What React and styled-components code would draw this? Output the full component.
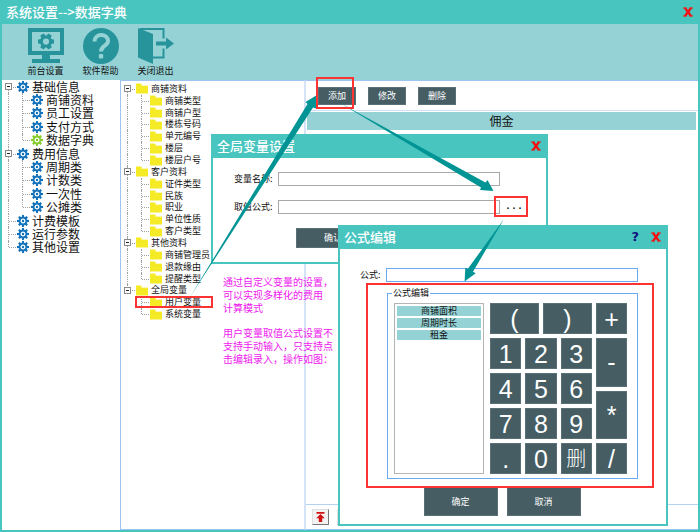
import React from 'react'
import styled, { createGlobalStyle } from 'styled-components'

const settingsTree = [
  {
    label: '基础信息',
    children: ['商铺资料', '员工设置', '支付方式', '数据字典'],
  },
  {
    label: '费用信息',
    children: ['周期类', '计数类', '一次性', '公摊类'],
  },
  { label: '计费模板', children: [] },
  { label: '运行参数', children: [] },
  { label: '其他设置', children: [] },
]

const dictionaryTree = [
  {
    label: '商铺资料',
    children: ['商铺类型', '商铺户型', '楼栋号码', '单元编号', '楼层', '楼层户号'],
  },
  {
    label: '客户资料',
    children: ['证件类型', '民族', '职业', '单位性质', '客户类型'],
  },
  { label: '其他资料', children: ['商铺管理员', '退款缘由', '提醒类型'] },
  { label: '全局变量', children: ['用户变量', '系统变量'] },
]

const digitRows = [
  ['(', ')'],
  ['1', '2', '3'],
  ['4', '5', '6'],
  ['7', '8', '9'],
  ['.', '0', '删'],
]

const GearIcon = ({ color }) => (
  <svg width="12" height="12" viewBox="-12 -12 24 24" aria-hidden="true">
    {[0, 45, 90, 135, 180, 225, 270, 315].map((angle) => (
      <path key={angle} d="M-2.6 -7 L-1.8 -12 H1.8 L2.6 -7 Z" fill={color} transform={`rotate(${angle})`} />
    ))}
    <circle r="6.6" fill="#fff" stroke={color} strokeWidth="3.4" />
    <circle r="2.4" fill={color} />
  </svg>
)

const FolderIcon = () => (
  <svg width="12" height="11" viewBox="0 0 12 11" aria-hidden="true">
    <path d="M0 0.5 H5 L6 2 H12 V10.5 H0 Z" fill="#f5ea26" />
    <path d="M5.5 2.5 H12" stroke="#fffbd0" strokeWidth="0.8" />
  </svg>
)

const CloseIcon = () => (
  <svg width="10" height="10" viewBox="0 0 10 10" aria-hidden="true">
    <path d="M2 1 L8 9 M8 1 L2 9" stroke="#f70d0d" strokeWidth="2.2" />
    <path d="M0 1 H3.6 M6.4 1 H10 M0 9 H3.6 M6.4 9 H10" stroke="#f70d0d" strokeWidth="1.2" />
  </svg>
)

const MonitorIcon = () => (
  <svg width="36" height="36" viewBox="0 0 36 36" aria-hidden="true">
    <path fillRule="evenodd" d="M0 0 H36 V27 H22 V31 H32 V35 H4 V31 H14 V27 H0 Z M4 4 V23 H32 V4 Z" fill="#27949c" />
    <g transform="translate(18 13.5)">
      {[0, 60, 120, 180, 240, 300].map((angle) => (
        <path key={angle} d="M-2.6 -4 L-2 -8 H2 L2.6 -4 Z" fill="#27949c" transform={`rotate(${angle + 30})`} />
      ))}
      <circle r="4.6" fill="none" stroke="#27949c" strokeWidth="3" />
    </g>
  </svg>
)

const HelpIcon = () => (
  <svg width="36" height="36" viewBox="0 0 36 36" aria-hidden="true">
    <circle cx="18" cy="18" r="18" fill="#27949c" />
    <path d="M11.5 13.5 C11.5 5 25 5 25 13 C25 18 18 17.5 18 23.5" fill="none" stroke="#94d2d5" strokeWidth="4" />
    <rect x="15.8" y="26" width="4.4" height="4.4" rx="1" fill="#94d2d5" />
  </svg>
)

const ExitIcon = () => (
  <svg width="36" height="36" viewBox="0 0 36 36" aria-hidden="true">
    <path d="M0 0 L15 6 V36 L0 29.5 Z" fill="#27949c" />
    <path d="M2 1 H25.5 V10.5 M25.5 20.5 V29.5 H15" fill="none" stroke="#27949c" strokeWidth="2" />
    <path d="M18 13.5 H28 V9.5 L36 15.5 L28 21.5 V17.5 H18 Z" fill="#27949c" />
  </svg>
)

const TopIcon = () => (
  <svg width="9" height="10" viewBox="0 0 9 10" aria-hidden="true">
    <path d="M0.5 0 H8.5 V1.7 H0.5 Z M4.5 2 L8.8 6.2 H6.2 V10 H2.8 V6.2 H0.2 Z" fill="#d31313" />
  </svg>
)

// every row starts with guide cells: "start", "tee", "end", "line" or "none"
const Tree = ({ items, renderIcon, compact }) => {
  const rows = []

  items.forEach((item, i) => {
    const lastRoot = i === items.length - 1
    const hasChildren = item.children.length > 0
    rows.push({
      label: item.label,
      guides: [i === 0 ? 'start' : lastRoot ? 'end' : 'tee'],
      hasChildren,
    })
    item.children.forEach((child, j) => {
      rows.push({
        label: child,
        guides: [lastRoot ? 'none' : 'line', j === item.children.length - 1 ? 'end' : 'tee'],
      })
    })
  })

  return (
    <TreeList $compact={compact}>
      {rows.map((row, i) => (
        <TreeRow key={i}>
          {row.guides.map((kind, g) => (
            <Guide key={g} $kind={kind}>
              {row.hasChildren && <Toggle aria-label={`折叠 ${row.label}`} />}
            </Guide>
          ))}
          <TreeIcon>{renderIcon(row.label)}</TreeIcon>
          <TreeLabel $compact={compact}>{row.label}</TreeLabel>
        </TreeRow>
      ))}
    </TreeList>
  )
}

const Annotations = () => (
  <Overlay aria-hidden="true">
    <g fill="#009494">
      <polygon points="190,297 307.5,104 305.5,102 317,95 316,108.5 313,107.5" />
      <polygon points="340,103 485.5,182.5 487.5,180 493.5,191 480,190 481,187.5" />
      <polygon points="504,219 467.7,269 465.3,267.7 464.6,281.5 475.7,273.3 473,271.7" />
    </g>
    <g fill="none" stroke="#fb3333" strokeWidth="2">
      <rect x="317" y="78" width="36" height="30" />
      <rect x="495" y="197" width="32" height="19" />
      <rect x="136" y="297" width="76" height="10" />
      <rect x="367" y="284" width="286" height="203" />
    </g>
  </Overlay>
)

const VariableDialog = () => (
  <VariableWindow role="dialog" aria-label="全局变量设置">
    <TitleBar>
      <Title as="h2">全局变量设置</Title>
      <IconButton aria-label="关闭"><CloseIcon /></IconButton>
    </TitleBar>
    <VariableForm>
      <label htmlFor="variable-name">变量名称:</label>
      <TextInput id="variable-name" type="text" />
      <label htmlFor="variable-formula">取值公式:</label>
      <TextInput id="variable-formula" type="text" />
      <MoreButton type="button" aria-label="编辑公式">...</MoreButton>
      <ConfirmRow>
        <ConfirmButton type="button">确认</ConfirmButton>
      </ConfirmRow>
    </VariableForm>
  </VariableWindow>
)

const FormulaDialog = () => (
  <FormulaWindow role="dialog" aria-label="公式编辑">
    <TitleBar>
      <Title as="h2">公式编辑</Title>
      <HelpButton aria-label="帮助">?</HelpButton>
      <IconButton aria-label="关闭"><CloseIcon /></IconButton>
    </TitleBar>
    <FormulaForm>
      <Field>
        <label htmlFor="formula">公式:</label>
        <TextInput id="formula" type="text" $active />
      </Field>
      <Editor>
        <legend>公式编辑</legend>
        <EditorBody>
          <VariableList>
            <li><button type="button">商铺面积</button></li>
            <li><button type="button">周期时长</button></li>
            <li><button type="button">租金</button></li>
          </VariableList>
          <Keypad>
            <Digits>
              {digitRows.map((row) => (
                <KeyRow key={row[0]}>
                  {row.map((key) => <Key type="button" key={key} $cjk={key === '删'}>{key}</Key>)}
                </KeyRow>
              ))}
            </Digits>
            <Operators>
              <Key type="button">+</Key>
              <Key type="button">-</Key>
              <Key type="button">*</Key>
              <Key type="button">/</Key>
            </Operators>
          </Keypad>
        </EditorBody>
      </Editor>
      <DialogActions>
        <LargeButton type="button">确定</LargeButton>
        <LargeButton type="button">取消</LargeButton>
      </DialogActions>
    </FormulaForm>
  </FormulaWindow>
)

const App = () => {
  return (
    <>
      <GlobalStyle />
      <AppWindow>
        <TitleBar>
          <Title>系统设置--&gt;数据字典</Title>
          <IconButton aria-label="关闭"><CloseIcon /></IconButton>
        </TitleBar>
        <Toolbar>
          <ToolButton><MonitorIcon />前台设置</ToolButton>
          <ToolButton><HelpIcon />软件帮助</ToolButton>
          <ToolButton><ExitIcon />关闭退出</ToolButton>
        </Toolbar>
        <Body>
          <Sidebar>
            <Tree
              items={settingsTree}
              renderIcon={(label) => <GearIcon color={label === '数据字典' ? '#86cc2c' : '#1272bb'} />}
            />
          </Sidebar>
          <DictionaryPanel>
            <Tree items={dictionaryTree} renderIcon={() => <FolderIcon />} compact />
          </DictionaryPanel>
          <Content>
            <Actions>
              <SmallButton>添加</SmallButton>
              <SmallButton>修改</SmallButton>
              <SmallButton>删除</SmallButton>
            </Actions>
            <TableArea>
              <Table>
                <thead>
                  <tr><th>佣金</th></tr>
                </thead>
              </Table>
            </TableArea>
            <Pager>
              <PagerButton aria-label="首页"><TopIcon /></PagerButton>
              <PagerButton aria-label="上一页" />
            </Pager>
          </Content>
        </Body>
        <Note>
          <p>通过自定义变量的设置，<br />可以实现多样化的费用<br />计算模式</p>
          <p>用户变量取值公式设置不<br />支持手动输入，只支持点<br />击编辑录入，操作如图：</p>
        </Note>
        <VariableDialog />
        <FormulaDialog />
        <Annotations />
      </AppWindow>
    </>
  )
}

export default App


const GlobalStyle = createGlobalStyle`
  * {
    box-sizing:border-box;
  }

  body {
    margin:0;
    background:#fff;
    color:#111;
    font-family:"Noto Sans CJK SC", sans-serif;
    font-size:9px;
    line-height:12px;
  }

  h1, h2, p, ul {
    margin:0;
    padding:0;
  }

  ul {
    list-style:none;
  }

  button, input {
    margin:0;
    padding:0;
    border:none;
    border-radius:0;
    background:none;
    color:inherit;
    font:inherit;
  }

  button {
    cursor:pointer;
  }
`

const AppWindow = styled.div`
  position:relative;
  display:flex;
  flex-direction:column;
  min-height:100vh;
  border:2px solid #49c5c0;
  border-top:none;
`

const TitleBar = styled.header`
  display:flex;
  align-items:center;
  gap:12px;
  height:24px;
  padding:0 5px 0 4px;
  background:#49c5c0;
`

const Title = styled.h1`
  flex:1;
  color:#fff;
  font-size:13px;
  font-weight:500;
  line-height:20px;
`

const IconButton = styled.button`
  display:flex;
`

const HelpButton = styled.button`
  color:#10107c;
  font-family:"DejaVu Sans", sans-serif;
  font-size:13px;
  font-weight:700;
`

const Toolbar = styled.nav`
  display:flex;
  height:56px;
  padding:4px 16px 0;
  background:#94d2d5;
`

const ToolButton = styled.button`
  display:flex;
  flex-direction:column;
  align-items:center;
  gap:1px;
  width:55px;
`

const Body = styled.div`
  flex:1;
  display:flex;
`

const Sidebar = styled.aside`
  width:118px;
`

const DictionaryPanel = styled.section`
  width:186px;
  padding-top:2px;
  border:1px solid #9cc4ee;
  border-right:2px solid #d4e4f6;
`

/* rows share the height evenly */
const TreeList = styled.ul`
  display:grid;
  grid-auto-rows:1fr;
  height:${(props) => (props.$compact ? '237px' : '174px')};
`

const TreeRow = styled.li`
  display:flex;
  align-items:center;
  min-height:0;
`

const Guide = styled.span`
  position:relative;
  display:flex;
  align-items:center;
  justify-content:center;
  align-self:stretch;
  width:14px;

  &::before {
    content:"";
    position:absolute;
    left:6px;
    top:${(props) => (props.$kind === 'start' ? '50%' : '0')};
    bottom:${(props) => (props.$kind === 'end' ? '50%' : '0')};
    border-left:${(props) => (props.$kind === 'none' ? 'none' : '1px dotted #a0a0a0')};
  }

  &::after {
    content:"";
    position:absolute;
    left:7px;
    right:0;
    top:50%;
    border-top:${(props) => (['none', 'line'].includes(props.$kind) ? 'none' : '1px dotted #a0a0a0')};
  }
`

const Toggle = styled.button`
  position:relative;
  z-index:1;
  display:flex;
  align-items:center;
  justify-content:center;
  width:7px;
  height:7px;
  margin-right:1px;
  border:1px solid #8a8a8a;
  background:#fff;

  &::before {
    content:"";
    width:3px;
    height:1px;
    background:#222;
  }
`

const TreeIcon = styled.span`
  display:flex;
  justify-content:center;
  width:14px;
`

const TreeLabel = styled.button`
  margin-left:2px;
  font-size:${(props) => (props.$compact ? '9px' : '12px')};
  line-height:12px;
  white-space:nowrap;
`

const Content = styled.main`
  flex:1;
  display:flex;
  flex-direction:column;
  border-top:1px solid #9cc4ee;
`

const Actions = styled.div`
  display:flex;
  gap:12px;
  padding:6px 12px 5px;
  border-bottom:1px solid #cfe0f4;
`

const Button = styled.button`
  border:1px solid #5b7076;
  background:#455d63;
  color:#fff;
`

const SmallButton = styled(Button)`
  width:38px;
  height:18px;
  line-height:16px;
`

const TableArea = styled.div`
  flex:1;
  padding:1px 2px 0 1px;
`

const Table = styled.table`
  width:100%;
  border-collapse:collapse;

  th {
    padding:0;
    background:#94d2d5;
    font-size:12px;
    font-weight:400;
    line-height:18px;
  }
`

const Pager = styled.footer`
  display:flex;
  gap:8px;
  padding:4px 6px;
  border-top:1px solid #b4d2f2;
  border-bottom:1px solid #9cc4ee;
`

const PagerButton = styled.button`
  display:flex;
  align-items:center;
  justify-content:center;
  width:17px;
  height:16px;
  border:1px solid #e0e0e0;
  border-right-color:#777;
  border-bottom-color:#777;
  background:#f2f2f2;
`

const Note = styled.aside`
  position:absolute;
  left:221px;
  top:275px;
  color:#ee18ee;
  font-size:10px;
  line-height:13px;
  white-space:nowrap;

  p + p {
    margin-top:12px;
  }
`

const Dialog = styled.section`
  position:absolute;
  border:2px solid #49c5c0;
  border-top:none;
  background:#fff;
`

const VariableWindow = styled(Dialog)`
  left:209px;
  top:134px;
  width:337px;
`

const FormulaWindow = styled(Dialog)`
  left:336px;
  top:225px;
  width:330px;
`

const VariableForm = styled.form`
  display:grid;
  grid-template-columns:auto 1fr 28px;
  align-items:center;
  row-gap:14px;
  padding:14px 18px 14px 21px;

  label {
    grid-column:1;
  }

  input {
    grid-column:2;
  }
`

const FormulaForm = styled.form`
  display:flex;
  flex-direction:column;
  padding:19px 28px 8px 20px;
`

const Field = styled.div`
  display:flex;
  align-items:center;
  height:14px;

  label {
    white-space:nowrap;
  }
`

const TextInput = styled.input`
  flex:1;
  min-width:0;
  height:14px;
  margin-left:5px;
  padding:0 2px;
  border:1px solid ${(props) => (props.$active ? '#6aaaf2' : '#a9a9a9')};
  background:#fff;
`

const MoreButton = styled.button`
  font-family:"Liberation Mono", monospace;
  font-size:10px;
  font-weight:700;
`

const ConfirmRow = styled.div`
  grid-column:1 / -1;
  display:flex;
  padding-left:62px;
`

const ConfirmButton = styled(Button)`
  width:74px;
  height:20px;
`

const Editor = styled.fieldset`
  min-width:0;
  margin:5px 0 0 27px;
  padding:0 10px 4px 6px;
  border:1px solid #6aaaf2;

  legend {
    margin-left:-2px;
    padding:0 1px;
  }
`

const EditorBody = styled.div`
  display:flex;
  gap:6px;
  padding-top:4px;
`

const VariableList = styled.ul`
  flex:1;
  display:flex;
  flex-direction:column;
  gap:2px;
  padding:2px;
  border:1px solid #b4b4b4;

  button {
    display:block;
    width:100%;
    height:10px;
    background:#94d2d5;
    line-height:10px;
  }
`

const Keypad = styled.div`
  display:flex;
  gap:4px;
`

const Digits = styled.div`
  display:flex;
  flex-direction:column;
  gap:4px;
  width:102px;
`

const KeyRow = styled.div`
  display:flex;
  gap:4px;
`

const Operators = styled.div`
  display:grid;
  grid-template-rows:31px 1fr 1fr 31px;
  gap:4px;
  width:31px;
`

const Key = styled(Button)`
  flex:1;
  min-height:31px;
  font-family:"Liberation Sans", "Noto Sans CJK SC", sans-serif;
  font-size:${(props) => (props.$cjk ? '20px' : '25px')};
  font-weight:${(props) => (props.$cjk ? '300' : '400')};
  line-height:28px;
`

const DialogActions = styled.div`
  display:flex;
  justify-content:center;
  gap:9px;
  padding:8px 0 0 6px;
`

const LargeButton = styled(Button)`
  width:74px;
  height:29px;
`

const Overlay = styled.svg`
  position:absolute;
  left:-2px;
  top:0;
  width:calc(100% + 4px);
  height:100%;
  pointer-events:none;
`
